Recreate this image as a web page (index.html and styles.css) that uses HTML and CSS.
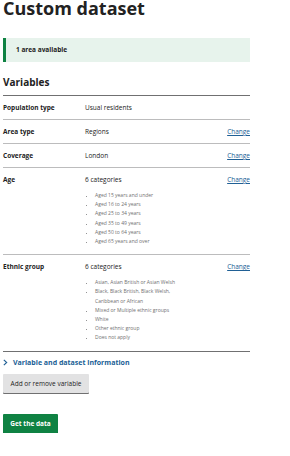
FILE: index.html
```html
<!DOCTYPE html>
<html lang="en">
<head>
<meta charset="UTF-8" />
<meta name="viewport" content="width=device-width, initial-scale=1" />
<title>Custom dataset</title>
<link rel="stylesheet" href="styles.css">
</head>
<body>
  <main class="page" role="main">
    <h1>Custom dataset</h1>

    <div class="panel">1 area available</div>

    <h2>Variables</h2>
    <dl class="summary">
      <div class="row">
        <dt>Population type</dt>
        <dd class="value">Usual residents</dd>
        <dd class="action"></dd>
      </div>
      <div class="row">
        <dt>Area type</dt>
        <dd class="value">Regions</dd>
        <dd class="action"><a href="#">Change</a></dd>
      </div>
      <div class="row">
        <dt>Coverage</dt>
        <dd class="value">London</dd>
        <dd class="action"><a href="#">Change</a></dd>
      </div>
      <div class="row">
        <dt>Age</dt>
        <dd class="value">
          6 categories
          <ul class="cats">
            <li>Aged 15 years and under</li>
            <li>Aged 16 to 24 years</li>
            <li>Aged 25 to 34 years</li>
            <li>Aged 35 to 49 years</li>
            <li>Aged 50 to 64 years</li>
            <li>Aged 65 years and over</li>
          </ul>
        </dd>
        <dd class="action"><a href="#">Change</a></dd>
      </div>
      <div class="row">
        <dt>Ethnic group</dt>
        <dd class="value">
          6 categories
          <ul class="cats">
            <li>Asian, Asian British or Asian Welsh</li>
            <li>Black, Black British, Black Welsh, Caribbean or African</li>
            <li>Mixed or Multiple ethnic groups</li>
            <li>White</li>
            <li>Other ethnic group</li>
            <li>Does not apply</li>
          </ul>
        </dd>
        <dd class="action"><a href="#">Change</a></dd>
      </div>
    </dl>

    <details class="info">
      <summary>
        <svg class="chev" viewBox="0 0 6 8" width="5" height="7" aria-hidden="true">
          <path d="M1 0.8 L4.4 4 L1 7.2" fill="none" stroke="#206095" stroke-width="1.4"/>
        </svg>
        Variable and dataset information
      </summary>
    </details>

    <button type="button" class="btn btn-secondary">Add or remove variable</button>
    <button type="button" class="btn btn-primary">Get the data</button>
  </main>
</body>
</html>
```

FILE: styles.css
```css
/* Reset & base */
* {
  box-sizing: border-box;
}
body {
  margin: 0;
  font-family: 'Open Sans', 'Noto Sans', sans-serif;
  color: #222;
  background: #fff;
}
.page {
  width: 250px;
  padding-left: 3px;
}
h1 {
  margin: 0;
  font-size: 18px;
  line-height: 16px;
  font-weight: 700;
}
/* Success panel */
.panel {
  margin-top: 22px;
  height: 24px;
  padding-left: 10px;
  border-left: 3px solid #0f8243;
  background: #e7f3ec;
  font-size: 6.5px;
  font-weight: 700;
  line-height: 24px;
}
h2 {
  margin: 13px 0 0;
  font-size: 10px;
  line-height: 14px;
  font-weight: 700;
}
/* Summary list */
.summary {
  margin: 6px 0 0;
  border-top: 1px solid #707071;
}
.row {
  display: grid;
  grid-template-columns: 82px 100px 1fr;
  padding: 7px 0 7px;
  border-bottom: 1px solid #bcbcbd;
  font-size: 6.5px;
  line-height: 9px;
}
.row:last-child {
  border-bottom-color: #707071;
}
.row dt {
  font-weight: 700;
}
.row dd {
  margin: 0;
}
.action {
  text-align: right;
}
.action a {
  color: #206095;
  text-decoration: underline;
}
.cats {
  margin: 7px 0 1px;
  padding-left: 10px;
  color: #707071;
  font-size: 5px;
  line-height: 9.2px;
}
.cats li::marker {
  font-size: 4px;
}
/* Details */
.info {
  margin-top: 6px;
}
.info summary {
  list-style: none;
  display: flex;
  align-items: center;
  gap: 5px;
  color: #206095;
  font-size: 7px;
  font-weight: 700;
  line-height: 10px;
}
.info summary::-webkit-details-marker {
  display: none;
}
/* Buttons */
.btn {
  display: block;
  border: none;
  border-radius: 1px;
  font-family: inherit;
  height: 19px;
  padding: 0 6px;
  cursor: pointer;
}
.btn-secondary {
  margin-top: 6px;
  width: 86px;
  background: #e2e2e3;
  box-shadow: 0 1px 0 #707071;
  color: #222;
  font-size: 6.5px;
}
.btn-primary {
  margin-top: 21px;
  width: 55px;
  background: #0f8243;
  box-shadow: 0 1px 0 #0b5f31;
  color: #fff;
  font-size: 6.5px;
  font-weight: 700;
}
```
